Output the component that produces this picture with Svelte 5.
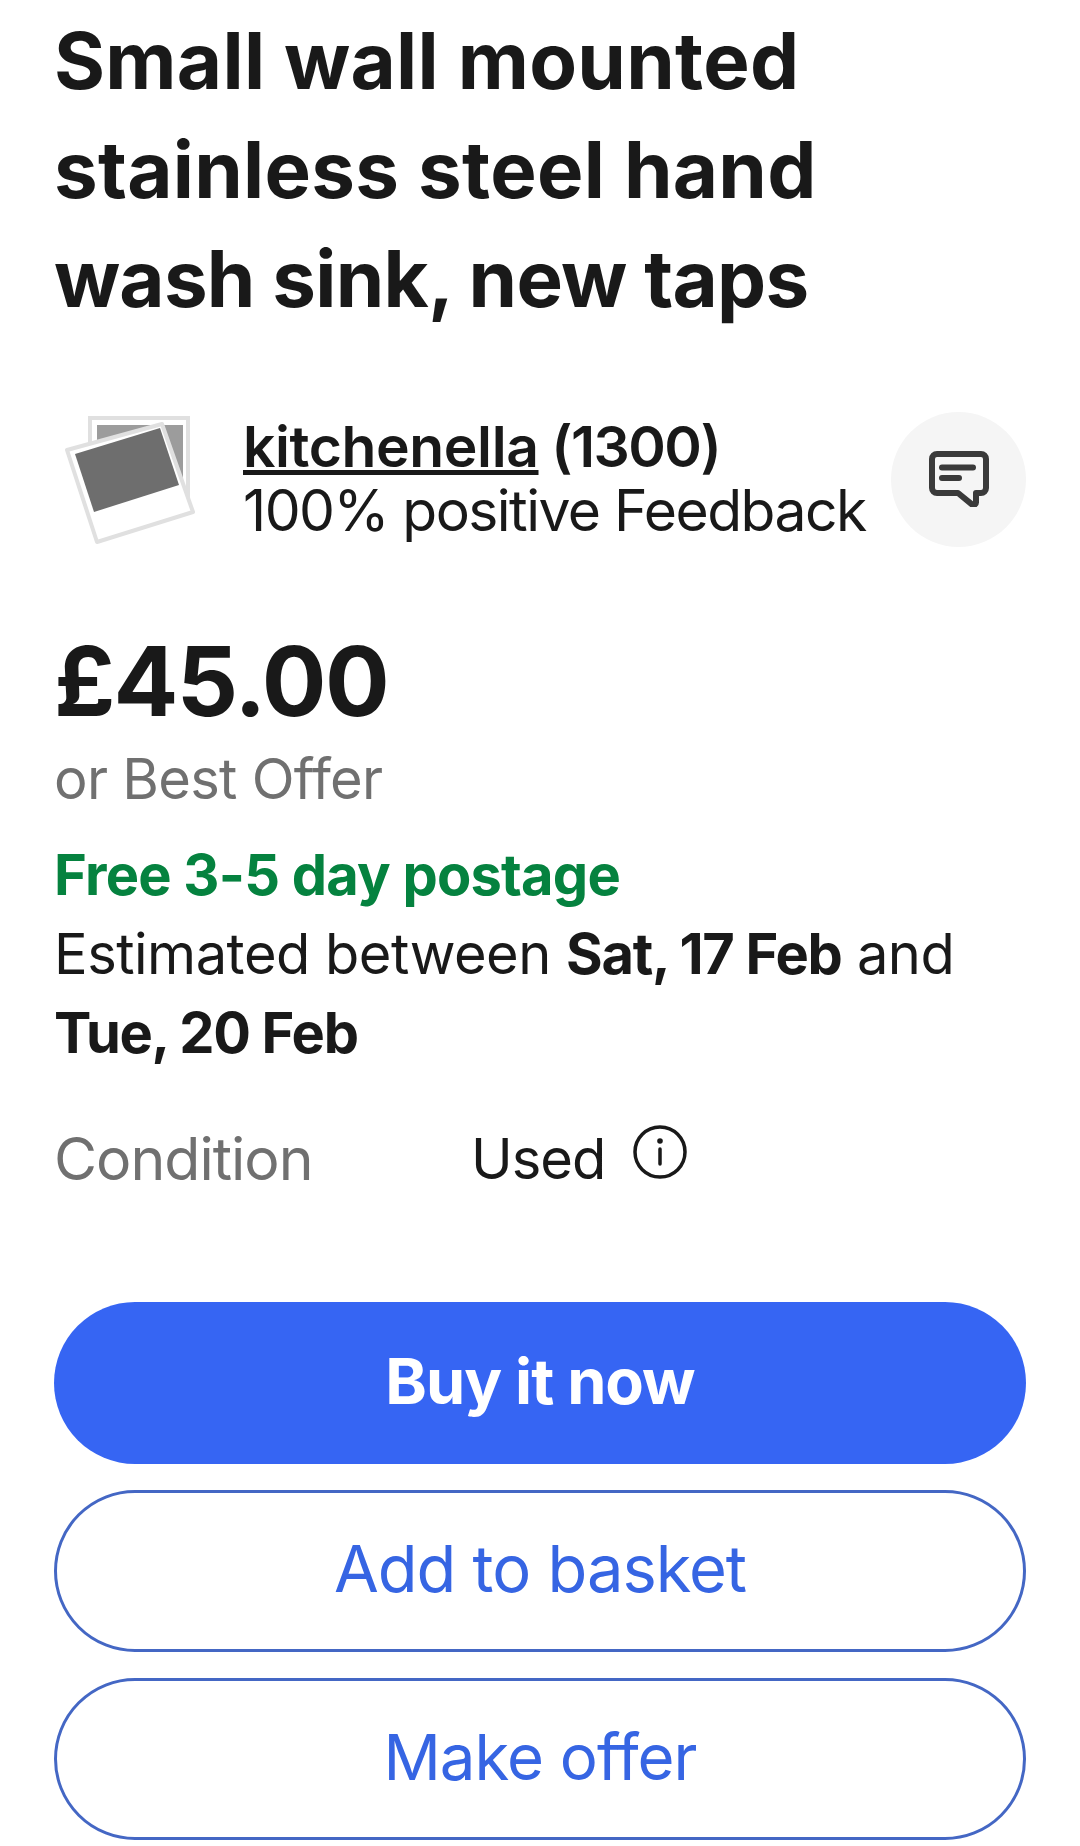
<script>
	const sellerName = 'kitchenella';
</script>

<main class="listing">
	<h1>Small wall mounted stainless steel hand <span class="tight">wash sink, new taps</span></h1>

	<section class="seller">
		<svg class="thumb" viewBox="0 0 140 135" aria-hidden="true">
			<rect x="30" y="6" width="98" height="93" fill="#fff" stroke="#e0e0e0" stroke-width="4" />
			<rect x="37" y="13" width="86" height="67" fill="#9c9c9c" />
			<polygon points="7,38 102,12 133,100 37,130" fill="#fff" stroke="#e0e0e0" stroke-width="4" stroke-linejoin="round" />
			<polygon points="15,42 100,16 119,73 34,100" fill="#6e6e6e" />
		</svg>
		<div class="seller-text">
			<div class="name-line"><a href="#seller">{sellerName}</a> (1300)</div>
			<div>100% positive Feedback</div>
		</div>
		<button class="chat" aria-label="Contact seller">
			<svg viewBox="0 0 60 56" width="60" height="56" aria-hidden="true">
				<path d="M8 3h44a5 5 0 0 1 5 5v29a5 5 0 0 1-5 5h-5v9.500a2.500 2.500 0 0 1-3.800 2.100L29 42H8a5 5 0 0 1-5-5V8a5 5 0 0 1 5-5z" fill="none" stroke="#3a3a3a" stroke-width="6" stroke-linejoin="round" />
				<path d="M13 16.500h31M13 27h17" fill="none" stroke="#3a3a3a" stroke-width="6" stroke-linecap="round" />
			</svg>
		</button>
	</section>

	<section class="price">
		<div class="amount">£45.00</div>
		<div class="offer">or Best Offer</div>
	</section>

	<section class="postage">
		<div class="free">Free 3-5 day postage</div>
		<p>Estimated between <b>Sat, 17 Feb</b> and <b>Tue, 20 Feb</b></p>
	</section>

	<section class="condition">
		<span class="label">Condition</span>
		<span class="value">Used</span>
		<svg viewBox="0 0 54 54" width="54" height="54" aria-hidden="true">
			<circle cx="27" cy="27" r="25" fill="none" stroke="#191919" stroke-width="3.500" />
			<circle cx="27" cy="16" r="2.800" fill="#191919" />
			<path d="M27 24v15" stroke="#191919" stroke-width="3.500" stroke-linecap="round" />
		</svg>
	</section>

	<section class="actions">
		<button class="primary">Buy it now</button>
		<button class="secondary">Add to basket</button>
		<button class="secondary offer-btn">Make offer</button>
	</section>
</main>

<style>
	:global(body) {
		margin: 0;
		background: #fff;
	}

	.listing {
		padding: 0 54px;
		font-family: Inter, "Liberation Sans", sans-serif;
		color: #191919;
	}

	h1 {
		margin: 0;
		max-width: 840px;
		padding-top: 6px;
		font-size: 78px;
		line-height: 109px;
		font-weight: 700;
		letter-spacing: 0.3px;
	}

	.tight {
		letter-spacing: -0.750px;
	}

	.seller {
		display: flex;
		align-items: center;
		margin-top: 78px;
		height: 136px;
	}

	.thumb {
		width: 140px;
		height: 135px;
		margin-left: 6px;
		flex: none;
	}

	.seller-text {
		flex: 1;
		margin-left: 43px;
		font-size: 57px;
		line-height: 64px;
		letter-spacing: -1.550px;
	}

	.name-line {
		font-weight: 600;
	}

	.seller-text a {
		color: inherit;
		letter-spacing: -0.400px;
	}

	.chat {
		width: 135px;
		height: 135px;
		flex: none;
		display: flex;
		align-items: center;
		justify-content: center;
		padding: 0;
		border: 0;
		border-radius: 50%;
		background: #f5f5f5;
	}

	.price {
		margin-top: 84px;
	}

	.amount {
		font-size: 96px;
		line-height: 100px;
		font-weight: 700;
		letter-spacing: -1.700px;
	}

	.offer {
		margin-top: 16px;
		font-size: 56px;
		line-height: 64px;
		letter-spacing: -0.700px;
		color: #707070;
	}

	.postage {
		margin-top: 25px;
		font-size: 56px;
		line-height: 79px;
		letter-spacing: -0.500px;
	}

	.free {
		font-weight: 700;
		letter-spacing: -0.770px;
		color: #05823f;
	}

	.postage p {
		margin: 0;
	}

	.postage b {
		font-weight: 700;
		letter-spacing: -1.300px;
	}

	.condition {
		display: flex;
		align-items: center;
		margin-top: 54px;
		font-size: 56px;
		line-height: 64px;
		letter-spacing: -1px;
	}

	.label {
		width: 417px;
		font-size: 59px;
		color: #707070;
	}

	.condition svg {
		margin-left: 28px;
		margin-top: -14px;
	}

	.actions {
		display: flex;
		flex-direction: column;
		gap: 26px;
		margin-top: 111px;
	}

	.actions button {
		height: 162px;
		padding: 0 0 5px;
		border-radius: 81px;
		font-family: inherit;
		font-size: 65px;
		letter-spacing: -1px;
	}

	.actions .primary {
		border: 0;
		background: #3665f3;
		color: #fff;
		font-size: 63px;
		font-weight: 700;
	}

	.secondary {
		border: 3px solid #4467c4;
		background: #fff;
		color: #3665e3;
	}

	.actions .offer-btn {
		font-size: 63.500px;
	}
</style>
